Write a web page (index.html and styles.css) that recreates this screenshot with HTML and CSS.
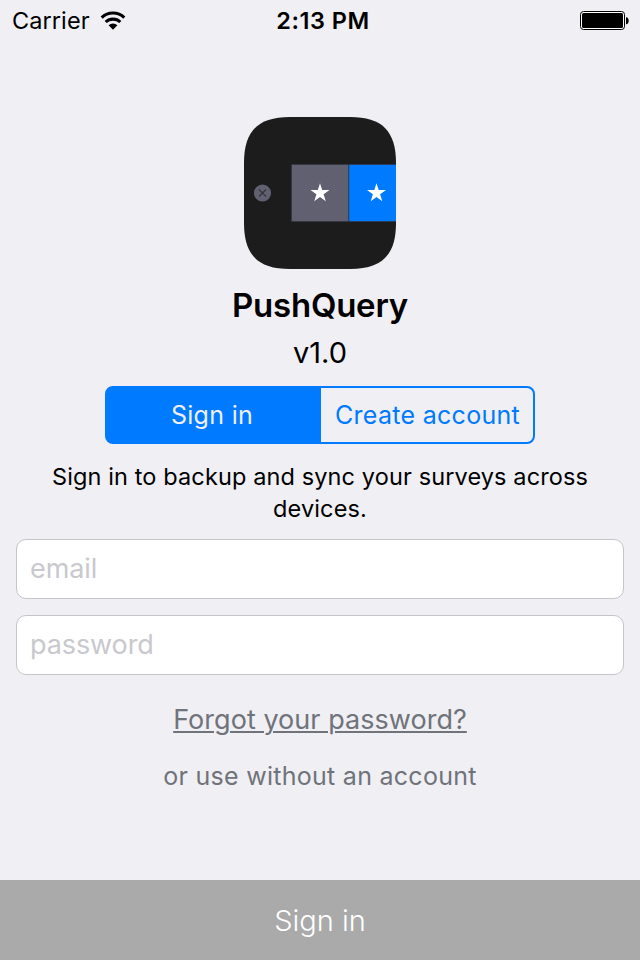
FILE: index.html
```html
<!DOCTYPE html>
<html lang="en">
<head>
<meta charset="utf-8">
<title>PushQuery</title>
<link rel="stylesheet" href="styles.css">
</head>
<body>
<div class="screen">
  <header class="status">
    <div class="status-left">
      <span class="carrier">Carrier</span>
      <svg class="wifi" width="26" height="20" viewBox="0 0 26 20">
        <g fill="none" stroke="#000" stroke-width="3.1">
          <path d="M1.7 6.6a16.2 16.2 0 0 1 22.6 0"/>
          <path d="M5.7 11a10.6 10.6 0 0 1 14.6 0"/>
        </g>
        <path d="M8.6 14.3a6.4 6.4 0 0 1 8.8 0L13 18.8z"/>
      </svg>
    </div>
    <span class="time">2:13 PM</span>
    <div class="status-right">
      <svg width="50" height="20" viewBox="0 0 50 20">
        <rect x=".5" y=".5" width="44" height="18" rx="3" fill="#fff" stroke="#000"/>
        <rect x="2" y="2" width="41" height="15" rx="1.5"/>
        <path d="M46 6.2c3.6 0 3.6 7 0 7z"/>
      </svg>
    </div>
  </header>
  <main class="content">
    <svg class="logo" width="152" height="152" viewBox="0 0 152 152">
      <defs>
        <clipPath id="mask"><path d="M46 0H106C138 0 152 14 152 46V106C152 138 138 152 106 152H46C14 152 0 138 0 106V46C0 14 14 0 46 0Z"/></clipPath>
      </defs>
      <g clip-path="url(#mask)">
        <rect width="152" height="152" fill="#1c1c1c"/>
        <rect x="47.5" y="47.5" width="57" height="57" fill="#606071"/>
        <rect x="104.8" y="47.5" width="48" height="57" fill="#007aff"/>
        <path d="M152 47.5H47.5V104.5H152M104.8 47.5v57" fill="none" stroke="#34343f" stroke-opacity=".65"/>
        <g fill="#fff">
          <path id="star" d="M76 66.2L78.2 73.1H85.5L79.6 77.3L81.8 84.3L76 80L70.2 84.3L72.4 77.3L66.5 73.1H73.8Z"/>
          <use href="#star" x="56.5"/>
        </g>
        <circle cx="18.5" cy="76" r="8.6" fill="#606071"/>
        <path d="M15 72.5l7 7M22 72.5l-7 7" stroke="#34343b" stroke-width="1.2"/>
      </g>
    </svg>
    <h1 class="title">PushQuery</h1>
    <p class="version">v1.0</p>
    <div class="segments">
      <div class="segment selected">Sign in</div>
      <div class="segment">Create account</div>
    </div>
    <p class="caption">Sign in to backup and sync your surveys across<br>devices.</p>
    <form class="fields">
      <input class="field email" type="email" placeholder="email">
      <input class="field password" type="password" placeholder="password">
    </form>
    <a class="forgot">Forgot your password?</a>
    <a class="skip">or use without an account</a>
  </main>
  <footer class="submit">Sign in</footer>
</div>
</body>
</html>
```

FILE: styles.css
```css
* { box-sizing: border-box; }
body {
  margin: 0;
  background: #efeff4;
  color: #000;
  font-family: Inter, "Liberation Sans", sans-serif;
}
.screen {
  width: 640px;
  height: 960px;
  display: flex;
  flex-direction: column;
  overflow: hidden;
}
.status {
  height: 42px;
  display: grid;
  grid-template-columns: 1fr auto 1fr;
  align-items: center;
  padding: 0 10px 0 12px;
  font-size: 23.5px;
  line-height: 42px;
}
.status-left { display: flex; align-items: center; gap: 10px; }
.wifi { margin-top: -1px; }
.carrier { letter-spacing: 0.08px; }
.time { padding-left: 4px; font-weight: 600; letter-spacing: 0.5px; }
.status-right { display: flex; justify-content: flex-end; }
.status-right svg { margin-top: -1px; }
.content {
  flex: 1;
  display: flex;
  flex-direction: column;
  align-items: center;
  padding: 75px 16px 0;
}
.logo { display: block; }
h1, p { margin: 0; }
.title { margin-top: 12px; height: 48px; font-size: 33px; line-height: 48px; font-weight: 600; letter-spacing: -0.25px; }
.version { margin-top: 5px; height: 38px; font-size: 29px; line-height: 38px; }
.segments {
  display: flex;
  width: 430px;
  height: 58px;
  margin-top: 14px;
  border: 2px solid #007aff;
  border-radius: 8px;
  background: linear-gradient(90deg, #007aff 216px, transparent 216px) border-box;
  color: #007aff;
  font-size: 25px;
  line-height: 54px;
  letter-spacing: 0.3px;
}
.segment { width: 212px; padding-left: 1px; text-align: center; }
.segment.selected { width: 214px; padding: 0 4px 0 0; color: #efeff4; }
.caption { margin-top: 17px; font-size: 23.5px; line-height: 32px; letter-spacing: 0.12px; text-align: center; white-space: nowrap; }
.fields { width: 100%; display: flex; flex-direction: column; gap: 16px; margin-top: 14px; }
.field {
  height: 60px;
  padding: 0 13px 2px;
  border: 1px solid #c4c4c9;
  border-radius: 10px;
  background: #fff;
  font: 27px Inter, "Liberation Sans", sans-serif;
  letter-spacing: -0.1px;
}
.field::placeholder { color: #c8c8ce; opacity: 1; }
.forgot {
  margin-top: 25px;
  height: 40px;
  color: #70737a;
  font-size: 27px;
  line-height: 40px;
  letter-spacing: 0.04px;
  text-decoration: underline;
  text-decoration-thickness: 2px;
  text-underline-offset: 2px;
}
.skip { margin-top: 16px; color: #70737a; font-size: 25px; line-height: 40px; letter-spacing: 0.27px; }
.submit {
  height: 80px;
  background: #aaa;
  color: #fff;
  font-size: 29px;
  font-weight: 350;
  line-height: 81px;
  text-align: center;
}
```
